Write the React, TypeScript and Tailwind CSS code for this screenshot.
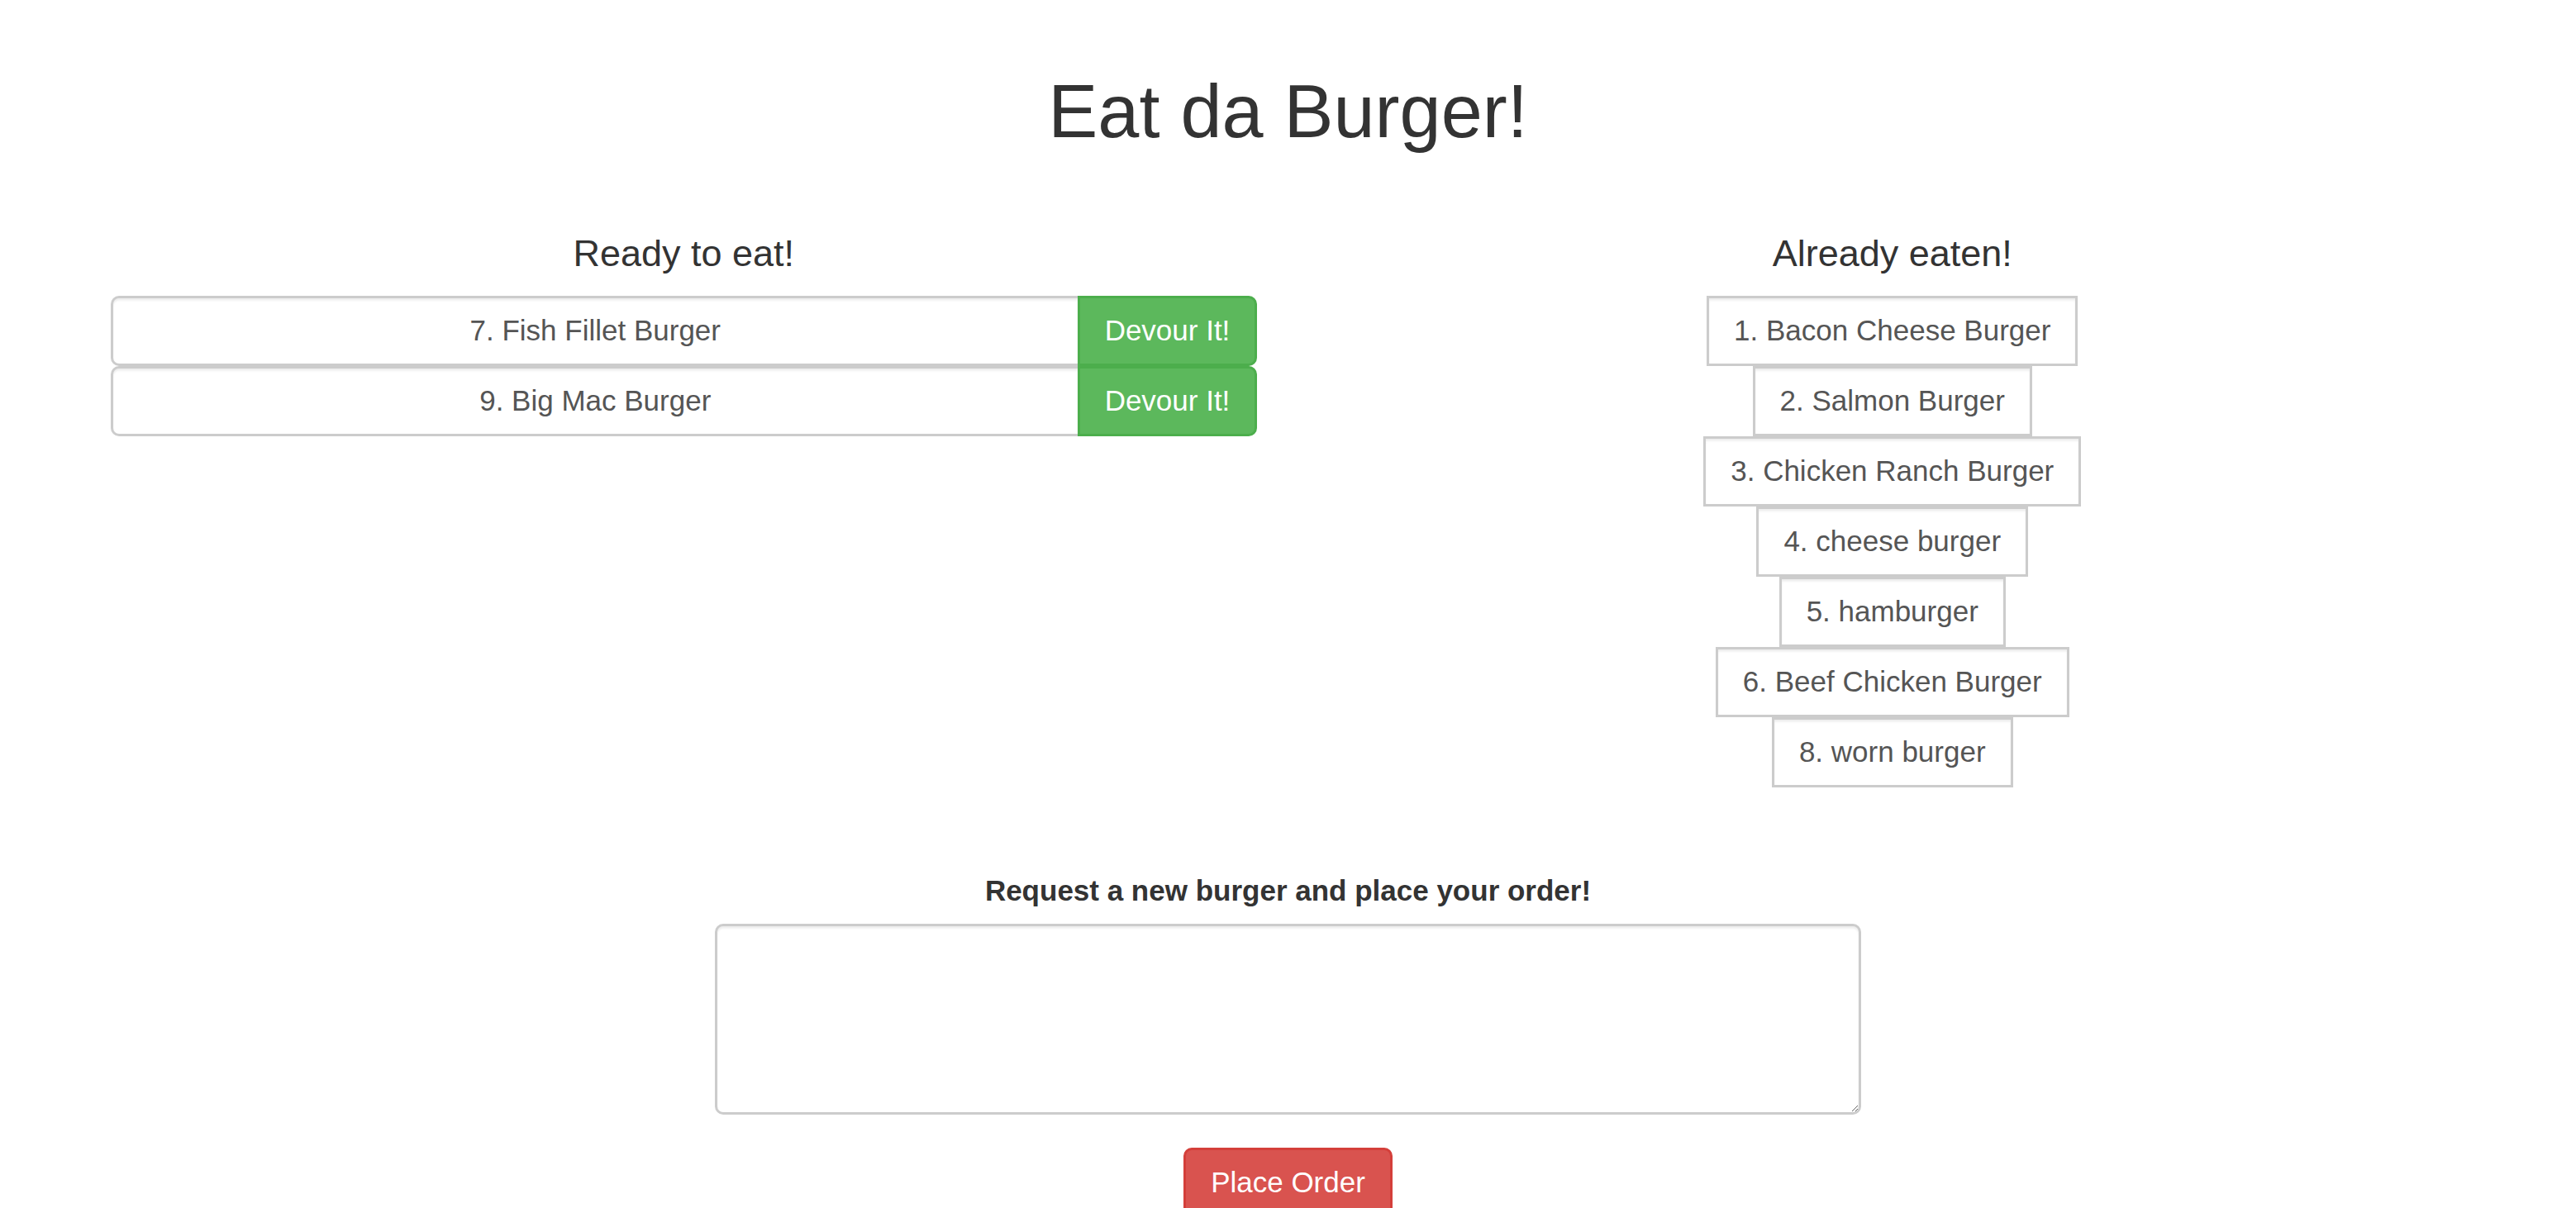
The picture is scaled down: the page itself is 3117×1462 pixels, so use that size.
import React from "react";

const ready = ["7. Fish Fillet Burger", "9. Big Mac Burger"];
const eaten = [
  "1. Bacon Cheese Burger",
  "2. Salmon Burger",
  "3. Chicken Ranch Burger",
  "4. cheese burger",
  "5. hamburger",
  "6. Beef Chicken Burger",
  "8. worn burger",
];

export default function App() {
  return (
    <div className="min-h-screen bg-white font-['Liberation_Sans',Arial,sans-serif] text-[#333]">
      <div className="mx-auto w-[2925px] px-[37.5px]">
        <h1 className="mt-[86px] mb-0 text-center text-[90px] font-normal leading-[99px]">
          Eat da Burger!
        </h1>
        <div className="mx-[-37.5px] mt-[97px] flex">
          <div className="w-1/2 px-[37.5px]">
            <h4 className="mb-[26px] text-center text-[45px] font-normal leading-[49.5px]">
              Ready to eat!
            </h4>
            <div className="flex flex-col">
              {ready.map((b) => (
                <div key={b} className="flex h-[85px]">
                  <div className="flex flex-1 items-center justify-center rounded-l-[10px] border-[3px] border-r-0 border-[#ccc] bg-white px-[30px] text-[35px] leading-[50px] text-[#555] shadow-[inset_0_2.5px_2.5px_rgba(0,0,0,0.075)]">
                    {b}
                  </div>
                  <button className="flex w-[217px] shrink-0 items-center justify-center whitespace-nowrap rounded-r-[10px] border-[3px] border-[#4cae4c] bg-[#5cb85c] px-0 text-[35px] leading-[50px] text-white">
                    Devour It!
                  </button>
                </div>
              ))}
            </div>
          </div>
          <div className="w-1/2 px-[37.5px]">
            <h4 className="mb-[26px] text-center text-[45px] font-normal leading-[49.5px]">
              Already eaten!
            </h4>
            <div className="flex flex-col items-center">
              {eaten.map((b) => (
                <div
                  key={b}
                  className="h-[85px] whitespace-nowrap border-[3px] border-[#ccc] bg-white px-[30px] py-[14.5px] text-center text-[35px] leading-[50px] text-[#555] shadow-[inset_0_2.5px_2.5px_rgba(0,0,0,0.075)]"
                >
                  {b}
                </div>
              ))}
            </div>
          </div>
        </div>
        <div className="mt-[100px] flex flex-col items-center">
          <label className="mb-[15px] text-[35px] font-bold leading-[50px] text-[#333]">
            Request a new burger and place your order!
          </label>
          <textarea
            rows={4}
            className="h-[231px] w-[1387px] rounded-[10px] border-[3px] border-[#ccc] bg-white px-[30px] py-[15px] text-[35px] text-[#555] shadow-[inset_0_2.5px_2.5px_rgba(0,0,0,0.075)] outline-none"
          />
          <button className="mt-[40px] h-[85px] whitespace-nowrap rounded-[10px] border-[3px] border-[#d43f3a] bg-[#d9534f] px-[30px] text-[35px] leading-[50px] text-white">
            Place Order
          </button>
        </div>
      </div>
    </div>
  );
}
